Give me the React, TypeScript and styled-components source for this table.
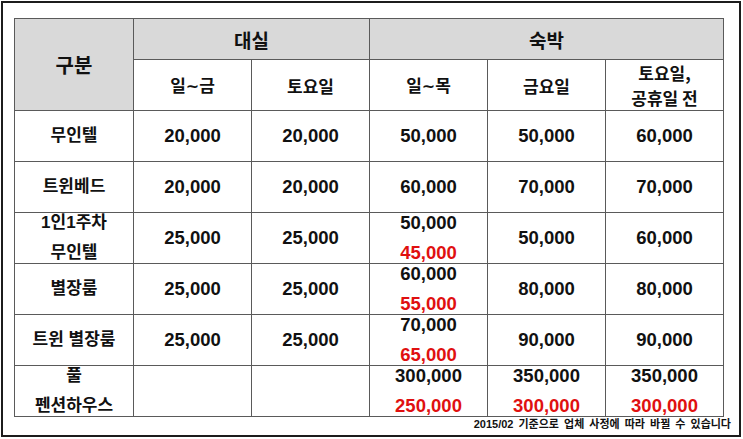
import styled, { createGlobalStyle } from "styled-components";

const GlobalStyle = createGlobalStyle`
    html, body {
        margin: 0;
        padding: 0;
        background: #ffffff;
    }
`

const Frame = styled.div`
    margin: 1px;
    width: 740px;
    height: 436px;
    box-sizing: border-box;
    border: 2px solid #1c1c1c;
    padding: 15px 0 0 11px;
    font-family: "Liberation Sans", "Noto Sans CJK KR", sans-serif;
    font-weight: bold;
    color: #111;
    overflow: hidden;
`

const Sheet = styled.table`
    border-collapse: collapse;
    table-layout: fixed;
    width: 710px;
`

const Row = styled.tr<{ $h: number }>`
    height: ${props => props.$h}px;
`

const HeadCell = styled.th<{ $gray?: boolean; $size?: number }>`
    border: 1px solid #5a5a5a;
    background: ${props => (props.$gray ? "#d9d9d9" : "#ffffff")};
    font-family: "Noto Sans CJK KR", "Liberation Sans", sans-serif;
    font-size: ${props => props.$size ?? 17}px;
    font-weight: bold;
    line-height: 25px;
    padding: 0;
    text-align: center;
    vertical-align: middle;
`

const Tilde = styled.span`
    font-family: "DejaVu Sans", sans-serif;
    font-weight: bold;
    font-size: 16px;
`

const Label = styled.td`
    border: 1px solid #5a5a5a;
    font-size: 17px;
    line-height: 30px;
    padding: 0;
    text-align: center;
    vertical-align: middle;
    white-space: nowrap;
`

const Cell = styled.td`
    border: 1px solid #5a5a5a;
    font-size: 18.5px;
    line-height: 30px;
    padding: 0;
    text-align: center;
    vertical-align: middle;
    white-space: nowrap;
`

const Price = styled.div<{ $sale?: boolean }>`
    color: ${props => (props.$sale ? "#e01010" : "#111")};
`

const Stack = styled.div`
    margin: -5px 0;
`

const Note = styled.div`
    padding-right: 8px;
    text-align: right;
    font-size: 11px;
    line-height: 14px;
    word-spacing: 2px;
`

type Value = string | [string, string] | null;

const rows: { name: string[]; h: number; values: Value[] }[] = [
    { name: ["무인텔"], h: 51, values: ["20,000", "20,000", "50,000", "50,000", "60,000"] },
    { name: ["트윈베드"], h: 51, values: ["20,000", "20,000", "60,000", "70,000", "70,000"] },
    { name: ["1인1주차", "무인텔"], h: 50, values: ["25,000", "25,000", ["50,000", "45,000"], "50,000", "60,000"] },
    { name: ["별장룸"], h: 50, values: ["25,000", "25,000", ["60,000", "55,000"], "80,000", "80,000"] },
    { name: ["트윈 별장룸"], h: 51, values: ["25,000", "25,000", ["70,000", "65,000"], "90,000", "90,000"] },
    { name: ["풀", "펜션하우스"], h: 50, values: [null, null, ["300,000", "250,000"], ["350,000", "300,000"], ["350,000", "300,000"]] },
];

const renderValue = (v: Value) => {
    if (v === null) return null;
    if (typeof v === "string") return <Price>{v}</Price>;
    return (
        <Stack>
            <Price>{v[0]}</Price>
            <Price $sale>{v[1]}</Price>
        </Stack>
    );
}

const App = () => {
    return (
        <>
            <GlobalStyle />
            <Frame>
                <Sheet>
                    <colgroup>
                        <col style={{ width: 119 }} />
                        <col style={{ width: 118 }} />
                        <col style={{ width: 118 }} />
                        <col style={{ width: 118 }} />
                        <col style={{ width: 118 }} />
                        <col style={{ width: 118 }} />
                    </colgroup>
                    <thead>
                        <Row $h={41}>
                            <HeadCell $gray $size={20} rowSpan={2}>구분</HeadCell>
                            <HeadCell $gray $size={19} colSpan={2}>대실</HeadCell>
                            <HeadCell $gray $size={19} colSpan={3}>숙박</HeadCell>
                        </Row>
                        <Row $h={51}>
                            <HeadCell>일<Tilde>~</Tilde>금</HeadCell>
                            <HeadCell>토요일</HeadCell>
                            <HeadCell>일<Tilde>~</Tilde>목</HeadCell>
                            <HeadCell>금요일</HeadCell>
                            <HeadCell>토요일,<br />공휴일 전</HeadCell>
                        </Row>
                    </thead>
                    <tbody>
                        {rows.map(r => (
                            <Row $h={r.h} key={r.name.join("")}>
                                <Label>
                                    {r.name.length > 1 ? (
                                        <Stack>{r.name.map(n => <div key={n}>{n}</div>)}</Stack>
                                    ) : r.name[0]}
                                </Label>
                                {r.values.map((v, i) => (
                                    <Cell key={i}>{renderValue(v)}</Cell>
                                ))}
                            </Row>
                        ))}
                    </tbody>
                </Sheet>
                <Note>2015/02 기준으로 업체 사정에 따라 바뀔 수 있습니다</Note>
            </Frame>
        </>
    );
}

export default App;
